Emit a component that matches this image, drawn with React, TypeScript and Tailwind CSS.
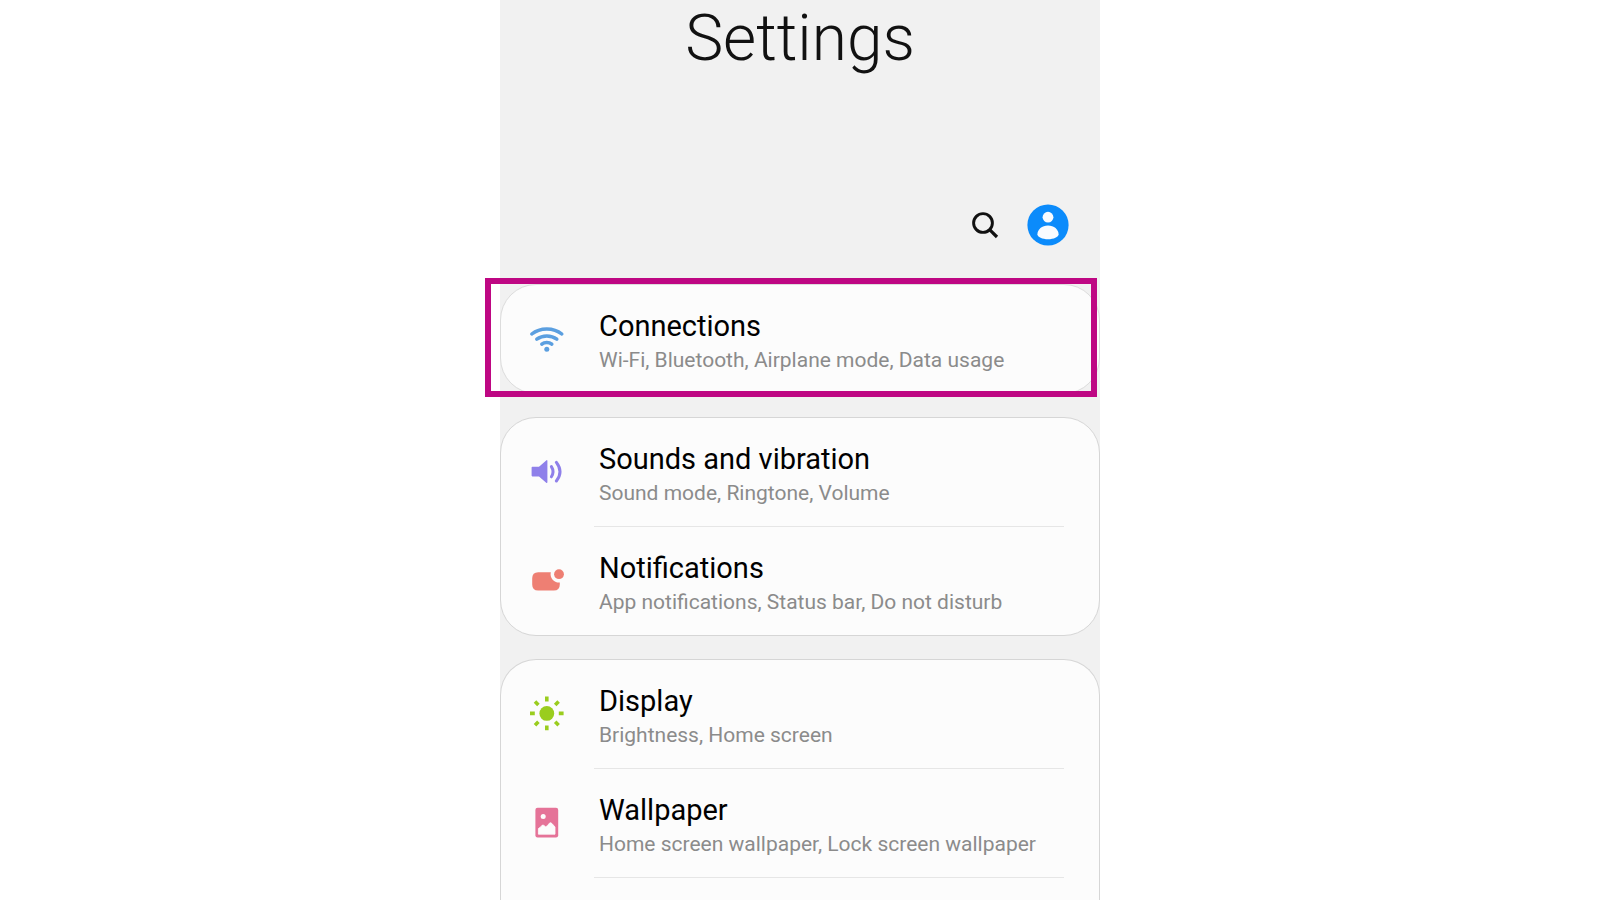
import type { ReactNode } from "react";

interface Item {
  title: string;
  summary: string;
  icon: ReactNode;
}

const WifiIcon = () => (
  <svg viewBox="0 0 36 36" className="size-9" fill="none" stroke="#5b9fe0" strokeWidth="3.5" strokeLinecap="round" aria-hidden="true">
    <path d="M2.8 13C11 6.2 24.6 6.2 32.8 13" />
    <path d="M7.8 18.2C13.5 13.8 22.1 13.8 27.8 18.2" />
    <path d="M12.8 23.2C15.6 20.9 20 20.9 22.8 23.2" />
    <circle cx="17.8" cy="28.3" r="2.5" fill="#5b9fe0" stroke="none" />
  </svg>
);

const SoundIcon = () => (
  <svg viewBox="0 0 36 36" className="size-9" fill="none" aria-hidden="true">
    <path d="M3.4 12.8H10L17.2 6.4Q18.4 5.6 18.4 7V28Q18.4 29.6 17.2 28.8L10 22.4H3.4Q2.6 22.4 2.6 21.6V13.6Q2.6 12.8 3.4 12.8Z" fill="#8f80ea" />
    <path d="M22.4 12.6Q25.6 17.6 22.4 22.8" stroke="#8f80ea" strokeWidth="3" strokeLinecap="round" />
    <path d="M27.4 8.4Q34.6 17.8 27.4 27" stroke="#8f80ea" strokeWidth="3" strokeLinecap="round" />
  </svg>
);

const NotificationIcon = () => (
  <svg viewBox="0 0 36 36" className="size-9" fill="#ee7f73" aria-hidden="true">
    <path d="M9.2 9.2H21.8A8.3 8.3 0 0 0 30.8 19.4V21.6Q30.8 27.6 24.8 27.6H9.2Q3.2 27.6 3.2 21.6V15.2Q3.2 9.2 9.2 9.2Z" />
    <circle cx="30" cy="11.2" r="4.9" />
  </svg>
);

const DisplayIcon = () => (
  <svg viewBox="0 0 36 36" className="size-9" fill="#9acd1e" stroke="#9acd1e" strokeWidth="3.6" aria-hidden="true">
    <circle cx="17.8" cy="17.4" r="7.4" stroke="none" />
    <path d="M17.8 0.6V5.4M17.8 29.4V34.2M1 17.4H5.8M29.8 17.4H34.6M6 5.6L9.4 9M26.2 25.8L29.6 29.2M6 29.2L9.4 25.8M26.2 9L29.6 5.6" />
  </svg>
);

const WallpaperIcon = () => (
  <svg viewBox="0 0 36 36" className="size-9" aria-hidden="true">
    <rect x="6.4" y="2.8" width="22.8" height="29.6" rx="2.2" fill="#e57398" />
    <circle cx="14.2" cy="11.4" r="2.5" fill="#fcfcfc" />
    <path d="M9.4 29.2V23.6Q11.4 22.6 13.2 20.2Q14.4 19.6 16.6 21.8Q18.2 21.6 20.4 18.2Q21.6 17 23 18.6L26 22V29.2Z" fill="#fcfcfc" stroke="#fcfcfc" strokeWidth="0.8" strokeLinejoin="round" />
  </svg>
);

const connections: Item[] = [
  { title: "Connections", summary: "Wi-Fi, Bluetooth, Airplane mode, Data usage", icon: <WifiIcon /> },
];

const alerts: Item[] = [
  { title: "Sounds and vibration", summary: "Sound mode, Ringtone, Volume", icon: <SoundIcon /> },
  { title: "Notifications", summary: "App notifications, Status bar, Do not disturb", icon: <NotificationIcon /> },
];

const appearance: Item[] = [
  { title: "Display", summary: "Brightness, Home screen", icon: <DisplayIcon /> },
  { title: "Wallpaper", summary: "Home screen wallpaper, Lock screen wallpaper", icon: <WallpaperIcon /> },
];

function Rows({ items, more = false }: { items: Item[]; more?: boolean }) {
  return (
    <ul>
      {items.map((item, i) => (
        <li key={item.title}>
          <button type="button" className="flex w-full items-center pl-7 text-left">
            {item.icon}
            <span className="flex flex-col pt-[22px] pb-[18px] pl-[34px]">
              <span className="text-[29px] leading-[38px] text-black">{item.title}</span>
              <span className="text-[21px] leading-[30px] text-[#8b8b8b]">{item.summary}</span>
            </span>
          </button>
          {(more || i < items.length - 1) && <div className="mr-[35px] ml-[93px] h-px bg-[#e6e6e6]" />}
        </li>
      ))}
    </ul>
  );
}

export default function App() {
  return (
    <div className="flex h-screen justify-center overflow-hidden bg-white font-[Roboto,sans-serif]">
      <main className="flex w-full max-w-[600px] flex-col bg-[#f1f1f1]">
        <header className="flex flex-col pb-[38px]">
          <h1 className="text-center text-[64px] leading-[78px] font-light text-[#111]">Settings</h1>
          <div className="flex items-center justify-end gap-7 pt-[126px] pr-[31px]">
            <button type="button" aria-label="Search">
              <svg viewBox="0 0 28 28" className="size-7" fill="none" stroke="#111" strokeWidth="2.9" aria-hidden="true">
                <circle cx="12" cy="12" r="9.4" />
                <path d="M18.6 18.6L26 26" strokeWidth="3.2" />
              </svg>
            </button>
            <button type="button" aria-label="Account">
              <svg viewBox="0 0 42 42" className="size-[42px]" aria-hidden="true">
                <circle cx="21" cy="21" r="20.6" fill="#0b8bfb" />
                <circle cx="21" cy="13.2" r="5.4" fill="#f8fbff" />
                <path d="M10.4 30.2C10.4 25.4 15 21.4 21 21.4S31.6 25.4 31.6 30.2C31.6 33 26.6 35.2 21 35.2S10.4 33 10.4 30.2Z" fill="#f8fbff" />
              </svg>
            </button>
          </div>
        </header>

        <div className="flex flex-1 flex-col gap-[23px]">
          <section className="relative rounded-[36px] border border-[#dcdcdc] bg-[#fcfcfc]">
            <Rows items={connections} />
            {/* highlight frame */}
            <div className="pointer-events-none absolute -top-[7px] right-0.5 -bottom-1 -left-4 border-6 border-[#be0783]" />
          </section>
          <section className="rounded-[36px] border border-[#d6d6d6] bg-[#fcfcfc]">
            <Rows items={alerts} />
          </section>
          <section className="flex-1 rounded-t-[36px] border border-b-0 border-[#d6d6d6] bg-[#fcfcfc]">
            <Rows items={appearance} more />
          </section>
        </div>
      </main>
    </div>
  );
}
